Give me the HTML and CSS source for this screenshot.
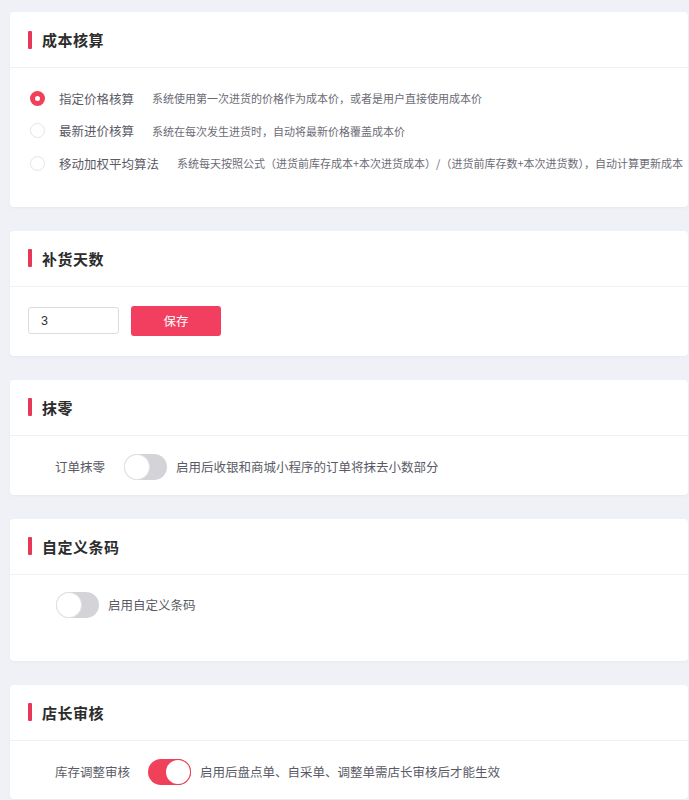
FILE: index.html
```html
<!DOCTYPE html>
<html lang="zh">
<head>
<meta charset="utf-8">
<link rel="stylesheet" href="styles.css">
</head>
<body>
<div class="page">
  <section class="card card-cost">
    <div class="card-head"><span class="bar"></span><h2>成本核算</h2></div>
    <div class="card-body radios">
      <div class="radio-row">
        <span class="radio checked"></span>
        <span class="radio-label">指定价格核算</span>
        <span class="desc">系统使用第一次进货的价格作为成本价，或者是用户直接使用成本价</span>
      </div>
      <div class="radio-row">
        <span class="radio"></span>
        <span class="radio-label">最新进价核算</span>
        <span class="desc">系统在每次发生进货时，自动将最新价格覆盖成本价</span>
      </div>
      <div class="radio-row">
        <span class="radio"></span>
        <span class="radio-label">移动加权平均算法</span>
        <span class="desc">系统每天按照公式（进货前库存成本+本次进货成本）/（进货前库存数+本次进货数），自动计算更新成本</span>
      </div>
    </div>
  </section>

  <section class="card card-days">
    <div class="card-head"><span class="bar"></span><h2>补货天数</h2></div>
    <div class="card-body form-row">
      <input class="num-input" type="text" value="3">
      <button class="btn-primary" type="button">保存</button>
    </div>
  </section>

  <section class="card card-round">
    <div class="card-head"><span class="bar"></span><h2>抹零</h2></div>
    <div class="card-body toggle-row indent">
      <span class="field-label">订单抹零</span>
      <span class="switch"><span class="knob"></span></span>
      <span class="switch-text">启用后收银和商城小程序的订单将抹去小数部分</span>
    </div>
  </section>

  <section class="card card-barcode">
    <div class="card-head"><span class="bar"></span><h2>自定义条码</h2></div>
    <div class="card-body toggle-row indent-sm">
      <span class="switch"><span class="knob"></span></span>
      <span class="switch-text">启用自定义条码</span>
    </div>
  </section>

  <section class="card card-audit">
    <div class="card-head"><span class="bar"></span><h2>店长审核</h2></div>
    <div class="card-body toggle-row indent">
      <span class="field-label wide">库存调整审核</span>
      <span class="switch on"><span class="knob"></span></span>
      <span class="switch-text">启用后盘点单、自采单、调整单需店长审核后才能生效</span>
    </div>
  </section>
</div>
</body>
</html>
```

FILE: styles.css
```css
* { box-sizing: border-box; }
html, body {
  margin: 0;
  padding: 0;
  background: #f0f1f6;
  font-family: "Noto Sans CJK SC", "Noto Sans", "Liberation Sans", sans-serif;
  color: #555;
}
.page {
  padding: 12px 1px 0 10px;
  display: flex;
  flex-direction: column;
  gap: 24px;
  overflow: hidden;
  height: 800px;
}
.card {
  background: #fff;
  border-radius: 4px;
  box-shadow: 0 1px 3px rgba(0, 0, 0, 0.04);
  flex-shrink: 0;
}
.card-head {
  height: 56px;
  display: flex;
  align-items: center;
  padding-left: 18px;
  border-bottom: 1px solid #f1f1f3;
}
.bar {
  width: 4px;
  height: 18px;
  background: #e8385a;
  border-radius: 1px;
  margin-right: 10px;
}
.card-head h2 {
  margin: 0;
  font-size: 15px;
  font-weight: 700;
  color: #2c2c2c;
  letter-spacing: 0.5px;
}
.radios {
  padding: 14px 0 27px 20px;
  display: flex;
  flex-direction: column;
}
.radio-row {
  height: 32.5px;
  display: flex;
  align-items: center;
  white-space: nowrap;
}
.radio {
  width: 15px;
  height: 15px;
  border-radius: 50%;
  border: 1px solid #e4e4e8;
  background: #fff;
  margin-right: 14px;
  flex-shrink: 0;
  position: relative;
}
.radio.checked {
  border: none;
  background: #f0405a;
}
.radio.checked::after {
  content: "";
  position: absolute;
  left: 5px;
  top: 5px;
  width: 5px;
  height: 5px;
  border-radius: 50%;
  background: #fff;
}
.radio-label {
  font-size: 12.5px;
  color: #5a5a66;
  margin-right: 18px;
}
.desc {
  font-size: 11px;
  color: #6c6c76;
}
.form-row {
  padding: 19px 0 20px 18px;
  display: flex;
  align-items: center;
  gap: 12px;
}
.num-input {
  width: 91px;
  height: 27px;
  border: 1px solid #dcdce0;
  border-radius: 3px;
  padding: 0 12px;
  font-family: "Liberation Sans", "Noto Sans CJK SC", sans-serif;
  font-size: 12.5px;
  color: #333;
  outline: none;
}
.btn-primary {
  width: 90px;
  height: 30px;
  border: none;
  border-radius: 3px;
  background: #f23f5f;
  color: #fff;
  font-family: "Noto Sans CJK SC", sans-serif;
  font-size: 12.5px;
}
.toggle-row {
  display: flex;
  align-items: center;
  white-space: nowrap;
}
.card-round .toggle-row { padding: 18px 0 15px 45px; }
.card-barcode .toggle-row { padding: 17px 0 43px 46px; }
.card-audit .toggle-row { padding: 18px 0 14px 45px; }
.field-label {
  font-size: 12.5px;
  color: #5a5a66;
  margin-right: 19px;
}
.field-label.wide { margin-right: 18px; }
.switch {
  width: 43px;
  height: 26px;
  border-radius: 13px;
  background: #d4d4d8;
  position: relative;
  flex-shrink: 0;
  margin-right: 9px;
}
.switch .knob {
  position: absolute;
  left: 1px;
  top: 1px;
  width: 24px;
  height: 24px;
  border-radius: 50%;
  background: #fff;
  box-shadow: 0 0 0 1px #e2e2e6;
}
.switch.on {
  background: #f0405a;
}
.switch.on .knob {
  left: auto;
  right: 1px;
  box-shadow: 0 0 0 1px #f0405a;
}
.switch-text {
  font-size: 12.5px;
  color: #5a5a66;
}
```
